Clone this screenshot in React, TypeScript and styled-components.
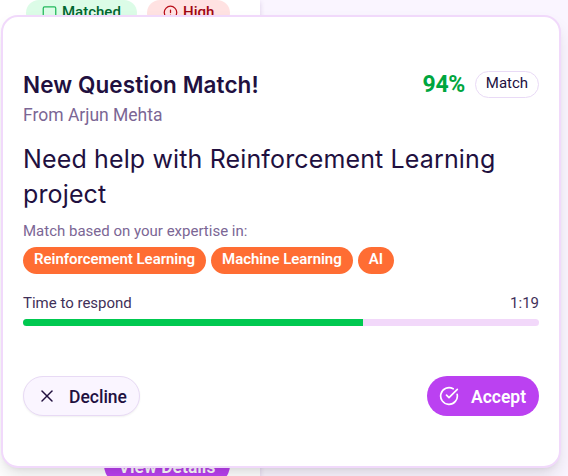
import React from "react";
import styled, { createGlobalStyle } from "styled-components";
import { CircleAlert, CircleCheckBig, MessageSquare, X } from "lucide-react";

const GlobalStyle = createGlobalStyle`
  * { box-sizing: border-box; }
  body { margin: 0; overflow: hidden; background: #faf5ff; font-family: Roboto, sans-serif; color: #21103f; }
  h2, h3, p { margin: 0; font-weight: 400; }
  button { font-family: inherit; margin: 0; }
  svg { flex: none; }
`;

const Page = styled.div`
  position: relative;
  width: 568px;
  height: 476px;
  overflow: hidden;
`;

const QuestionCard = styled.section`
  display: flex;
  flex-direction: column;
  justify-content: space-between;
  width: 260px;
  height: 485px;
  padding: 0 30px 0 26px;
  background: #fff;
  box-shadow: 0 2px 5px rgba(76, 29, 120, 0.18);
`;

const StatusRow = styled.div`
  display: flex;
  gap: 10px;
`;

const Status = styled.span<{ $tone: "green" | "red" }>`
  display: flex;
  align-items: center;
  gap: 5px;
  height: 26px;
  width: ${(p) => (p.$tone === "green" ? 111 : 83)}px;
  padding: 0 0 2px 16px;
  border-radius: 13px;
  font-size: 15px;
  line-height: 24px;
  font-weight: 500;
  color: ${(p) => (p.$tone === "green" ? "#016630" : "#9f0712")};
  background: ${(p) => (p.$tone === "green" ? "#dcfce7" : "#ffe2e2")};
  svg { color: ${(p) => (p.$tone === "green" ? "#22b85c" : "#b80d18")}; }
`;

const DetailsButton = styled.button`
  align-self: flex-end;
  width: 126px;
  height: 40px;
  padding: 4px 0 0;
  border: 0;
  border-radius: 20px;
  color: #fff;
  background: #bb41f1;
  font-size: 17.5px;
  font-weight: 600;
`;

const Dialog = styled.div`
  position: absolute;
  left: 1px;
  top: 15px;
  width: 560px;
  height: 453px;
  padding: 53px 20px 0;
  background: #fff;
  border: 2px solid #f1d9fb;
  border-radius: 17px;
  box-shadow: 0 10px 18px -2px rgba(0, 0, 0, 0.11), 0 4px 6px -4px rgba(0, 0, 0, 0.1);
`;

const SplitRow = styled.div`
  display: flex;
  align-items: center;
  justify-content: space-between;
`;

const Heading = styled.h2`
  font: 600 22.5px/30px Inter, sans-serif;
  letter-spacing: 0.1px;
`;

const Score = styled.div`
  display: flex;
  align-items: center;
  gap: 10px;
`;

const Percent = styled.span`
  font-size: 23px;
  line-height: 28px;
  font-weight: 700;
  letter-spacing: -0.3px;
  color: #00a63e;
`;

const MatchBadge = styled.span`
  width: 64px;
  height: 27px;
  margin-bottom: 2px;
  border: 1px solid #e9daf6;
  border-radius: 14px;
  font-size: 15px;
  line-height: 23px;
  text-align: center;
`;

const Sender = styled.p`
  font-size: 17.5px;
  line-height: 30px;
  color: #7b6695;
`;

const QuestionTitle = styled.h3`
  margin-top: 12px;
  font: 400 25px/35px Inter, sans-serif;
  letter-spacing: 0.14px;
`;

const Reason = styled.p`
  margin-top: 8px;
  font-size: 15px;
  line-height: 22px;
  color: #7b6695;
`;

const Tags = styled.div`
  display: flex;
  gap: 5px;
  margin-top: 5px;
`;

const Tag = styled.span`
  height: 27px;
  padding: 0 11px;
  border-radius: 14px;
  background: #ff6d33;
  color: #fff;
  font-size: 15px;
  line-height: 25px;
  font-weight: 600;
  letter-spacing: -0.04px;
`;

const TimerRow = styled(SplitRow)`
  margin-top: 18px;
  font-size: 15px;
  line-height: 22px;
  color: #3f3059;
`;

const Track = styled.div`
  height: 7px;
  margin-top: 5px;
  border-radius: 4px;
  overflow: hidden;
  background: #f2d8fa;
`;

const Fill = styled.div`
  height: 100%;
  background: #00c950;
`;

const Actions = styled(SplitRow)`
  margin-top: 50px;
`;

const ActionButton = styled.button<{ $primary?: boolean }>`
  display: flex;
  align-items: center;
  gap: 12px;
  height: 40px;
  width: ${(p) => (p.$primary ? 112 : 117)}px;
  padding: 0 0 0 ${(p) => (p.$primary ? 12 : 13)}px;
  border-radius: 20px;
  border: ${(p) => (p.$primary ? "0" : "1px solid #e8daf5")};
  color: ${(p) => (p.$primary ? "#fff" : "#21103f")};
  background: ${(p) => (p.$primary ? "#bb41f1" : "#faf5ff")};
  box-shadow: ${(p) => (p.$primary ? "none" : "0 1px 2px rgba(0,0,0,.06)")};
  font-size: 17.5px;
  font-weight: ${(p) => (p.$primary ? 600 : 500)};
  span { padding-top: 2px; }
`;

const skills = ["Reinforcement Learning", "Machine Learning", "AI"];

export default function App() {
  return (
    <>
      <GlobalStyle />
      <Page>
        <QuestionCard>
          <StatusRow>
            <Status $tone="green"><MessageSquare size={15} />Matched</Status>
            <Status $tone="red"><CircleAlert size={15} />High</Status>
          </StatusRow>
          <DetailsButton>View Details</DetailsButton>
        </QuestionCard>
        <Dialog role="dialog">
          <SplitRow>
            <Heading>New Question Match!</Heading>
            <Score>
              <Percent>94%</Percent>
              <MatchBadge>Match</MatchBadge>
            </Score>
          </SplitRow>
          <Sender>From Arjun Mehta</Sender>
          <QuestionTitle>Need help with Reinforcement Learning project</QuestionTitle>
          <Reason>Match based on your expertise in:</Reason>
          <Tags>{skills.map((s) => <Tag key={s}>{s}</Tag>)}</Tags>
          <TimerRow><span>Time to respond</span><span>1:19</span></TimerRow>
          <Track><Fill style={{ width: `${(79 / 120) * 100}%` }} /></Track>
          <Actions>
            <ActionButton><X size={20} strokeWidth={1.8} /><span>Decline</span></ActionButton>
            <ActionButton $primary><CircleCheckBig size={20} strokeWidth={2} /><span>Accept</span></ActionButton>
          </Actions>
        </Dialog>
      </Page>
    </>
  );
}
